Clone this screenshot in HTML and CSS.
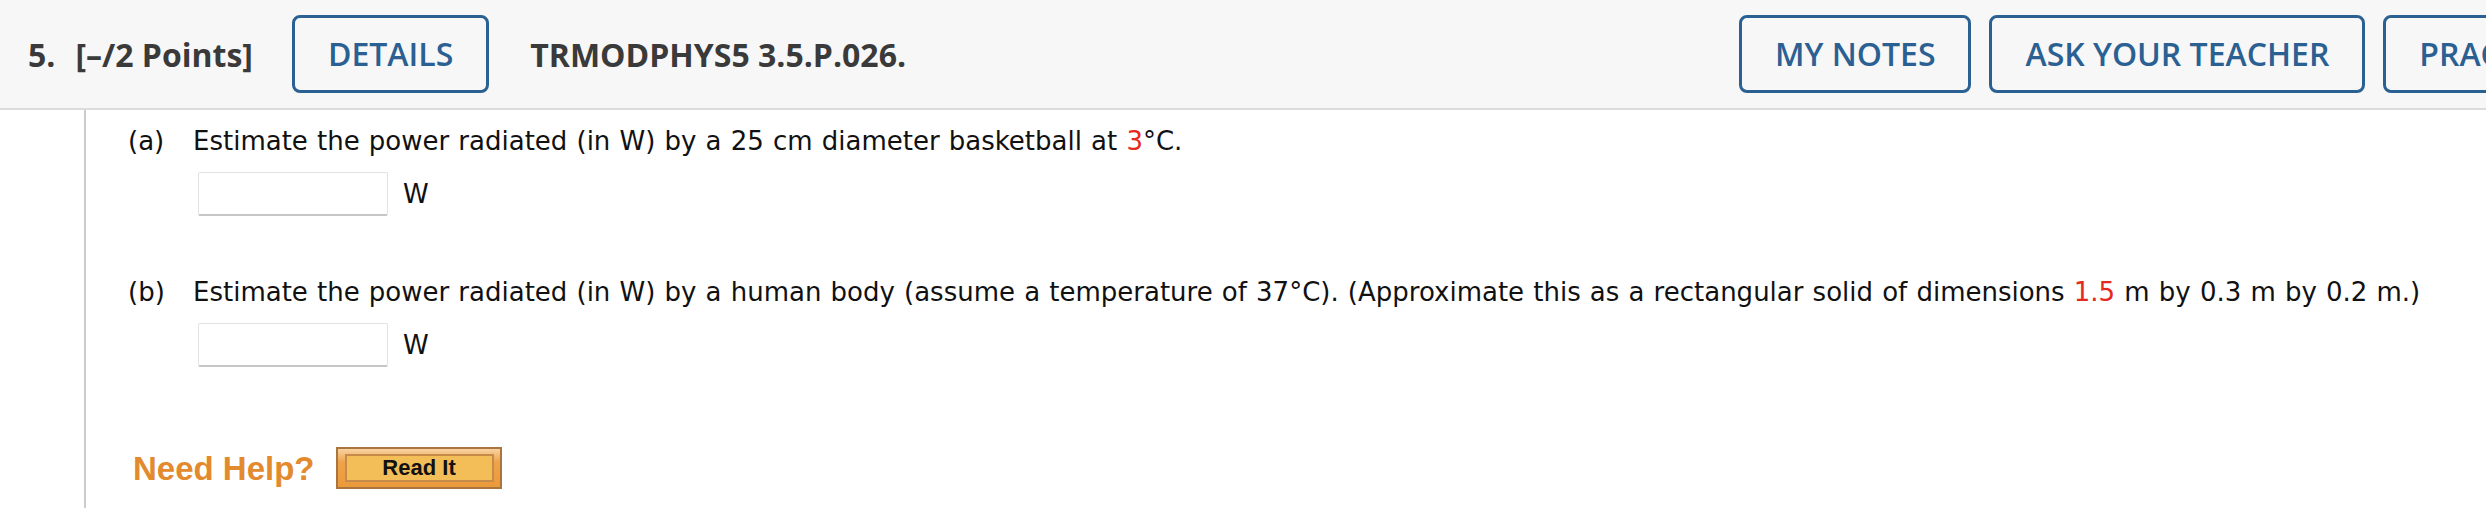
FILE: index.html
```html
<!DOCTYPE html>
<html lang="en">
<head>
<meta charset="utf-8">
<title>Question 5</title>
<link rel="stylesheet" href="styles.css">
</head>
<body>
<div class="header">
  <span class="qnum">5.</span>
  <span class="points">[–/2 Points]</span>
  <button class="btn btn-details">DETAILS</button>
  <span class="title">TRMODPHYS5 3.5.P.026.</span>
  <div class="toolbar">
    <button class="btn">MY NOTES</button>
    <button class="btn">ASK YOUR TEACHER</button>
    <button class="btn">PRACTICE ANOTHER</button>
  </div>
</div>
<div class="content">
  <div class="gutter"></div>
  <div class="main">
    <div class="part">
      <div class="q-row">
        <span class="label">(a)</span>
        <span class="q-text">Estimate the power radiated (in W) by a 25 cm diameter basketball at <span class="red">3</span>°C.</span>
      </div>
      <div class="answer">
        <input class="field" type="text">
        <span class="unit">W</span>
      </div>
    </div>
    <div class="part part-b">
      <div class="q-row">
        <span class="label">(b)</span>
        <span class="q-text">Estimate the power radiated (in W) by a human body (assume a temperature of 37°C). (Approximate this as a rectangular solid of dimensions <span class="red">1.5</span> m by 0.3 m by 0.2 m.)</span>
      </div>
      <div class="answer">
        <input class="field" type="text">
        <span class="unit">W</span>
      </div>
    </div>
    <div class="help">
      <span class="help-text">Need Help?</span>
      <span class="read-it"><span class="read-it-inner">Read It</span></span>
    </div>
  </div>
</div>
</body>
</html>
```
FILE: styles.css
```css
html, body {
  margin: 0;
  padding: 0;
  background: #ffffff;
  overflow: hidden;
}

body {
  width: 2486px;
  height: 508px;
}

.header {
  display: flex;
  align-items: center;
  box-sizing: border-box;
  width: 2763px;
  height: 110px;
  padding: 0 0 0 28px;
  background: #f7f7f7;
  border-bottom: 2px solid #dcdcdc;
  font-family: "Open Sans", "Liberation Sans", sans-serif;
  font-size: 32px;
  color: #3a3a3a;
}

.qnum {
  font-weight: 700;
  margin-right: 20px;
}

.points {
  font-weight: 700;
  margin-right: 39px;
}

.title {
  font-weight: 700;
  margin-left: 41px;
}

.btn {
  box-sizing: border-box;
  height: 78px;
  padding: 0 33px;
  border: 3px solid #2b6092;
  border-radius: 8px;
  background: transparent;
  color: #2b6092;
  font-family: "Open Sans", "Liberation Sans", sans-serif;
  font-size: 32px;
  font-weight: 600;
  line-height: 1;
  white-space: nowrap;
}

.toolbar {
  display: flex;
  gap: 18px;
  margin-left: auto;
}

.content {
  display: flex;
  min-height: 398px;
}

.gutter {
  width: 84px;
  flex: none;
  border-right: 2px solid #cccccc;
}

.main {
  flex: 1;
  padding: 13px 0 0 42px;
  font-family: "DejaVu Sans", Verdana, sans-serif;
  font-size: 26px;
  line-height: 36px;
  word-spacing: 0.9px;
  color: #111111;
}

.q-row {
  display: flex;
  white-space: nowrap;
}

.label {
  width: 65px;
  flex: none;
}

.red {
  color: #e5291f;
}

.answer {
  display: flex;
  align-items: center;
  gap: 15px;
  margin: 13px 0 0 70px;
}

.field {
  box-sizing: border-box;
  width: 190px;
  height: 44px;
  margin: 0;
  padding: 0 8px;
  border: 1px solid #e2e2e2;
  border-bottom: 2px solid #c6c6c6;
  border-radius: 2px;
  background: #ffffff;
  font: inherit;
}

.part-b {
  margin-top: 58px;
}

.help {
  display: flex;
  align-items: center;
  gap: 21px;
  margin: 80px 0 0 5px;
  word-spacing: normal;
}

.help-text {
  font-family: "Liberation Sans", Arial, sans-serif;
  font-weight: 700;
  font-size: 33px;
  line-height: 1;
  color: #e38a2e;
}

.read-it {
  display: flex;
  box-sizing: border-box;
  width: 166px;
  height: 42px;
  padding: 5px 6px 5px 7px;
  border: 2px solid #a9743d;
  background: linear-gradient(#f7d3a0 0%, #eea24a 35%, #eb9a3a 100%);
}

.read-it-inner {
  flex: 1;
  display: flex;
  align-items: center;
  justify-content: center;
  border: 2px solid #c58b4a;
  background: #f3bd58;
  font-family: "Liberation Sans", Arial, sans-serif;
  font-weight: 700;
  font-size: 22px;
  color: #111111;
}
```
